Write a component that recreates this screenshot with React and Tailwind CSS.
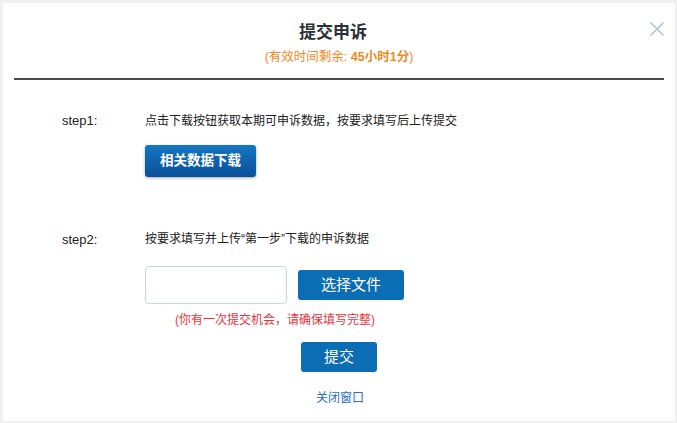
const font = { fontFamily: '"Liberation Sans", "Noto Sans CJK SC", sans-serif' };

export default function App() {
  return (
    <div className="w-[677px] h-[423px] bg-[#f0f0f0] pt-[3px] pl-[3px] pr-[2px] pb-[2px]" style={font}>
      <div className="relative w-full h-full bg-white">
        {/* Close */}
        <button className="absolute left-[644px] top-[16px] w-[20px] h-[20px] flex items-center justify-center">
          <svg width="16" height="16" viewBox="0 0 16 16">
            <path d="M1.5 1.5 L14.5 14.5 M14.5 1.5 L1.5 14.5" stroke="#b9c4d2" strokeWidth="1.6" />
          </svg>
        </button>

        {/* Header */}
        <div className="pt-[18px] text-center">
          <h2 className="pr-[12px] text-[17px] leading-[24px] font-bold text-[#2b2f36]">提交申诉</h2>
          <p className="mt-[3px] text-[12.5px] leading-[18px] text-[#ec8a1f]">
            (有效时间剩余: <span className="font-bold">45小时1分</span>)
          </p>
        </div>
        <div className="mx-[11px] mt-[12px] h-[2px] bg-[#4a4a4a]" />

        {/* Step 1 */}
        <div className="flex mt-[32px] pl-[59px]">
          <div className="w-[83px] text-[13px] leading-[18px] text-[#222]">step1:</div>
          <div>
            <div className="text-[12px] leading-[18px] text-[#222]">
              点击下载按钮获取本期可申诉数据，按要求填写后上传提交
            </div>
            <button className="mt-[15px] w-[111px] h-[32px] rounded-[3px] bg-gradient-to-b from-[#1677c2] to-[#0a4f98] shadow-[0_1px_3px_rgba(0,0,0,0.35)] text-white text-[13.5px] font-bold">
              相关数据下载
            </button>
          </div>
        </div>

        {/* Step 2 */}
        <div className="flex mt-[53px] pl-[59px]">
          <div className="w-[83px] text-[13px] leading-[18px] text-[#222] pt-[1px]">step2:</div>
          <div>
            <div className="text-[12px] leading-[18px] text-[#222]">
              按要求填写并上传“第一步”下载的申诉数据
            </div>
            <div className="flex items-center mt-[18px]">
              <input className="w-[142px] h-[38px] rounded-[4px] border border-[#c9d5e4] outline-none" />
              <button className="ml-[11px] w-[106px] h-[30px] rounded-[3px] bg-[#0b6db3] text-white text-[15px]">
                选择文件
              </button>
            </div>
          </div>
        </div>

        <p className="mt-[7px] text-center pr-[128px] text-[12px] leading-[18px] text-[#e8333d]">
          (你有一次提交机会，请确保填写完整)
        </p>

        <div className="flex justify-center mt-[13px]">
          <button className="w-[76px] h-[30px] rounded-[3px] bg-[#0b6db3] text-white text-[15px]">
            提交
          </button>
        </div>

        <div className="flex justify-center mt-[17px] pl-[2px]">
          <a className="text-[12px] leading-[18px] text-[#2b6cc4] cursor-pointer">关闭窗口</a>
        </div>
      </div>
    </div>
  );
}
